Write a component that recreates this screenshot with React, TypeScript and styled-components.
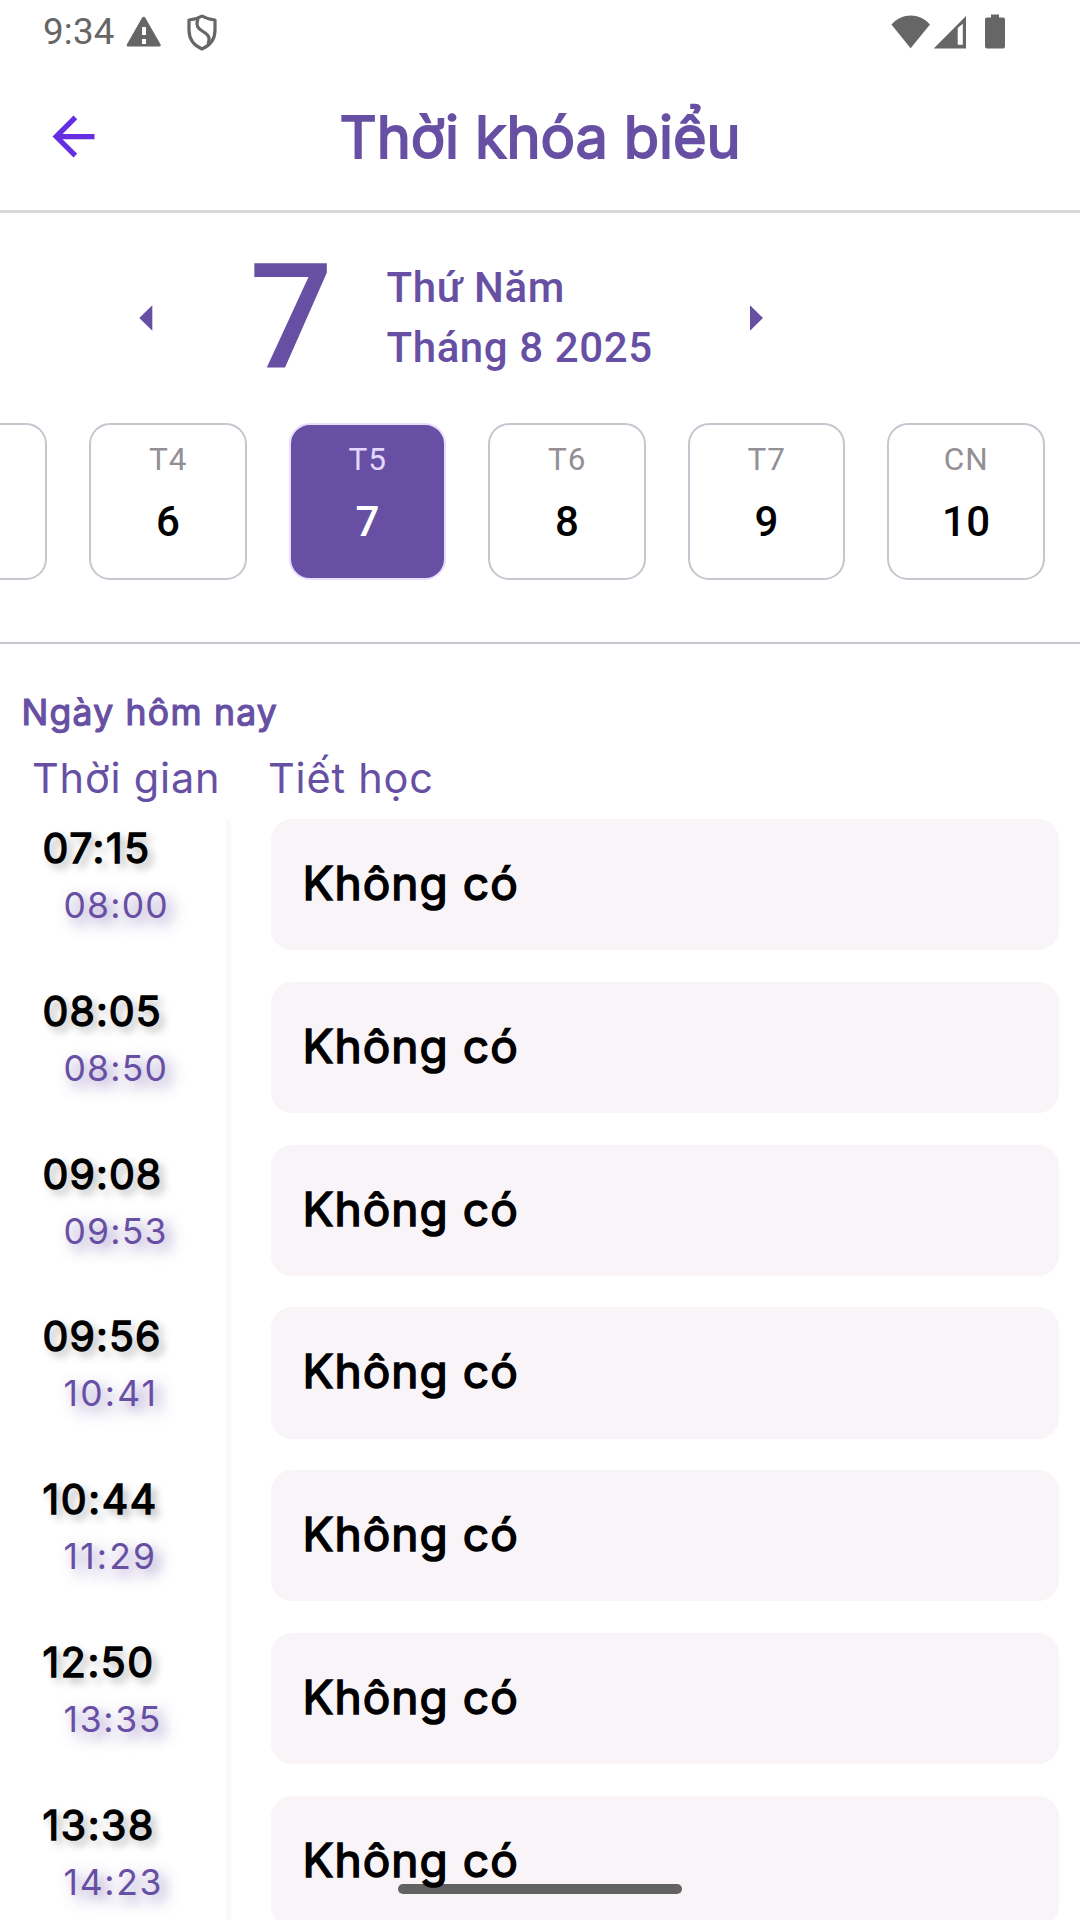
import React from "react";
import styled, { createGlobalStyle } from "styled-components";

const PRIMARY = "#6750a4";
const OUTLINE = "#cac4d0";

const GlobalStyle = createGlobalStyle`
  *, *::before, *::after { box-sizing: border-box; }
  html, body { margin: 0; padding: 0; background: #fff; }
`;

const Screen = styled.div`
  position: relative;
  display: flex;
  flex-direction: column;
  width: 1080px;
  height: 1920px;
  overflow: hidden;
  background: #fff;
  color: #000;
  font-family: Roboto, "Liberation Sans", sans-serif;
`;

const StatusBar = styled.div`
  display: flex;
  flex: none;
  align-items: center;
  justify-content: space-between;
  height: 63px;
  padding: 0 75px 0 43px;
  color: #666;
`;

const StatusGroup = styled.div`
  display: flex;
  align-items: center;
`;

const Clock = styled.span`
  width: 82px;
  font-size: 36.75px;
  line-height: 62px;
  letter-spacing: 0.2px;
`;

const StatusIcon = styled.svg<{ $gap?: number }>`
  display: block;
  flex: none;
  margin-left: ${(p) => p.$gap ?? 0}px;
  fill: currentColor;
`;

const Header = styled.header`
  display: grid;
  flex: none;
  grid-template-columns: 146px 1fr 146px;
  align-items: center;
  height: 150px;
  border-bottom: 3px solid #d9d9d9;
`;

const BackButton = styled.button`
  display: flex;
  justify-content: center;
  padding: 0;
  border: 0;
  background: none;
  color: #652ee3;
`;

const Title = styled.h1`
  margin: 0;
  color: ${PRIMARY};
  font-family: Inter, "Liberation Sans", sans-serif;
  font-size: 57.75px;
  font-weight: 400;
  line-height: 74px;
  letter-spacing: -0.15px;
  text-align: center;
  white-space: nowrap;
  -webkit-text-stroke: 1.8px ${PRIMARY};
`;

const DatePicker = styled.section`
  display: flex;
  flex: none;
  align-items: center;
  height: 209px;
  color: ${PRIMARY};
`;

const StepButton = styled.button<{ $before: number }>`
  display: flex;
  flex: none;
  margin: 0 0 0 ${(p) => p.$before}px;
  padding: 0;
  border: 0;
  background: none;
  color: inherit;
`;

const BigDay = styled.span`
  width: 137px;
  margin-left: 96.5px;
  font-size: 147px;
  font-weight: 500;
  line-height: 160px;
`;

const DateLabel = styled.div`
  display: flex;
  flex-direction: column;
  width: 363.5px;
  font-size: 42px;
  font-weight: 500;
  line-height: 60px;
  letter-spacing: 0.6px;
  white-space: nowrap;
`;

const DayStrip = styled.nav`
  display: flex;
  flex: none;
  gap: 42px;
  height: 222px;
  padding-top: 1px;
  margin-left: -110.5px;
  border-bottom: 2px solid ${OUTLINE};
`;

const DayCard = styled.button<{ $active?: boolean }>`
  display: flex;
  flex: none;
  flex-direction: column;
  align-items: center;
  gap: 11px;
  width: 157.5px;
  height: 157px;
  padding: 14px 0 0 1px;
  border: 2px solid ${(p) => (p.$active ? "#e8ddff" : OUTLINE)};
  border-radius: 21px;
  background: ${(p) => (p.$active ? PRIMARY : "#fff")};
  color: ${(p) => (p.$active ? "#fff" : "#000")};
  font-family: inherit;
`;

const Weekday = styled.span<{ $active?: boolean }>`
  color: ${(p) => (p.$active ? "#e4d7ff" : "#938f94")};
  font-size: 31.5px;
  line-height: 42px;
  letter-spacing: 1.05px;
`;

const DayNumber = styled.span`
  font-size: 42px;
  font-weight: 500;
  line-height: 60px;
  letter-spacing: 0.4px;
`;

const Schedule = styled.main`
  display: flex;
  flex: none;
  flex-direction: column;
  padding-top: 45px;
  font-family: Inter, "Liberation Sans", sans-serif;
`;

const Caption = styled.h2`
  margin: 0 0 0 21.5px;
  color: ${PRIMARY};
  font-size: 35.5px;
  font-weight: 400;
  line-height: 48px;
  letter-spacing: 1.25px;
  -webkit-text-stroke: 1.2px ${PRIMARY};
`;

const Columns = styled.div`
  display: grid;
  grid-template-columns: 236px 1fr;
  padding: 11px 0 11px 32px;
  color: ${PRIMARY};
  font-size: 41.5px;
  line-height: 60px;
  letter-spacing: 0.8px;
`;

const Lesson = styled.div`
  display: grid;
  grid-template-columns: 231px 1fr;
  height: 162.75px;
`;

const TimeCell = styled.div`
  display: flex;
  flex-direction: column;
  padding-left: 42.5px;
  border-right: 5px solid #f9f9f9;
`;

/* Narrow "1" digits get a little extra tracking so the times line up. */
const StartTime = styled.time<{ $ones: number }>`
  font-size: 41px;
  line-height: 59px;
  letter-spacing: ${(p) => 1.1 + p.$ones * 0.5}px;
  -webkit-text-stroke: 1.4px #000;
  text-shadow: 5px 5px 8px rgba(0, 0, 0, 0.35);
`;

const EndTime = styled.time<{ $ones: number }>`
  margin-left: 21px;
  color: ${PRIMARY};
  font-size: 35.5px;
  line-height: 56px;
  letter-spacing: ${(p) => 1.2 + p.$ones * 0.5}px;
  text-shadow: 6px 6px 14px rgba(103, 80, 164, 0.7);
`;

const LessonCard = styled.article`
  height: 131.25px;
  margin: 0 21px 0 40px;
  padding-left: 31.5px;
  border-radius: 21px;
  background: #f8f4f8;
  font-size: 46px;
  line-height: 129.5px;
  letter-spacing: 1.05px;
  -webkit-text-stroke: 1.5px #000;
`;

const HomeIndicator = styled.div`
  position: absolute;
  bottom: 26px;
  left: 398px;
  width: 284px;
  height: 10px;
  border-radius: 5px;
  background: rgba(0, 0, 0, 0.6);
`;

/* The first card is scrolled out: only its right edge is on screen. */
const days = [
  { name: "", date: null },
  { name: "T4", date: 6 },
  { name: "T5", date: 7 },
  { name: "T6", date: 8 },
  { name: "T7", date: 9 },
  { name: "CN", date: 10 },
];

const lessons = [
  ["07:15", "08:00"],
  ["08:05", "08:50"],
  ["09:08", "09:53"],
  ["09:56", "10:41"],
  ["10:44", "11:29"],
  ["12:50", "13:35"],
  ["13:38", "14:23"],
];

const selected = 7;

const countOnes = (time: string) => time.split("1").length - 1;

export default function App() {
  return (
    <Screen>
      <GlobalStyle />
      <StatusBar>
        <StatusGroup>
          <Clock>9:34</Clock>
          <StatusIcon width="36" height="32" viewBox="0 0 36 32">
            <path
              fillRule="evenodd"
              d="M17.2 1.6Q18.7 0 20.2 1.6L35.6 28.4Q36.2 30.6 34.4 30.6H3Q1.2 30.6 1.8 28.4ZM17 11V19H21V11ZM17 23V28H21V23Z"
            />
          </StatusIcon>
          <StatusIcon $gap={25} width="32" height="38" viewBox="0 0 32 38">
            <g fill="none" stroke="currentColor" strokeWidth="3.2" strokeLinejoin="round">
              <path d="M16 3C11 6 7 6.600 3 7V17C3 26 8 32.500 16 36C24 32.500 29 26 29 17V7C25 6.600 21 6 16 3Z" />
              <path d="M12 5.500C9.500 13 12 15.500 17 18.500C23 22 24.500 25 22 31" />
            </g>
          </StatusIcon>
        </StatusGroup>
        <StatusGroup>
          <StatusIcon width="40" height="34" viewBox="0 0 40 34">
            <path d="M.4 9.500C11.200-2.500 28.200-2.500 39 9.500L19.600 33.200Z" />
          </StatusIcon>
          <StatusIcon $gap={2} width="34" height="34" viewBox="0 0 34 34">
            <path fillRule="evenodd" d="M.7 33.500L33 1V33.500ZM24.700 13L29.800 8.700V29.800H24.700Z" />
          </StatusIcon>
          <StatusIcon $gap={18} width="20" height="35" viewBox="0 0 20 35">
            <path d="M6 .5H14V3.500H18Q20 3.500 20 5.500V32Q20 34.500 18 34.500H2Q0 34.500 0 32V5.500Q0 3.500 2 3.500H6Z" />
          </StatusIcon>
        </StatusGroup>
      </StatusBar>

      <Header>
        <BackButton aria-label="Quay lại">
          <svg width="63" height="63" viewBox="0 0 24 24" fill="currentColor">
            <path d="M20 11H7.830l5.590-5.590L12 4l-8 8 8 8 1.410-1.410L7.830 13H20v-2z" />
          </svg>
        </BackButton>
        <Title>Thời khóa biểu</Title>
      </Header>

      <DatePicker>
        <StepButton $before={139} aria-label="Ngày trước">
          <svg width="14" height="26" viewBox="0 0 14 26" fill="currentColor">
            <path d="M13.300 .3V25.700L.3 13Z" />
          </svg>
        </StepButton>
        <BigDay>7</BigDay>
        <DateLabel>
          <span>Thứ Năm</span>
          <span>Tháng 8 2025</span>
        </DateLabel>
        <StepButton $before={0} aria-label="Ngày sau">
          <svg width="14" height="26" viewBox="0 0 14 26" fill="currentColor">
            <path d="M0 .3V25.700L13 13Z" />
          </svg>
        </StepButton>
      </DatePicker>

      <DayStrip>
        {days.map((day) => (
          <DayCard key={day.name} $active={day.date === selected}>
            <Weekday $active={day.date === selected}>{day.name}</Weekday>
            <DayNumber>{day.date}</DayNumber>
          </DayCard>
        ))}
      </DayStrip>

      <Schedule>
        <Caption>Ngày hôm nay</Caption>
        <Columns>
          <span>Thời gian</span>
          <span>Tiết học</span>
        </Columns>
        {lessons.map(([start, end]) => (
          <Lesson key={start}>
            <TimeCell>
              <StartTime $ones={countOnes(start)}>{start}</StartTime>
              <EndTime $ones={countOnes(end)}>{end}</EndTime>
            </TimeCell>
            <LessonCard>Không có</LessonCard>
          </Lesson>
        ))}
      </Schedule>
      <HomeIndicator />
    </Screen>
  );
}
